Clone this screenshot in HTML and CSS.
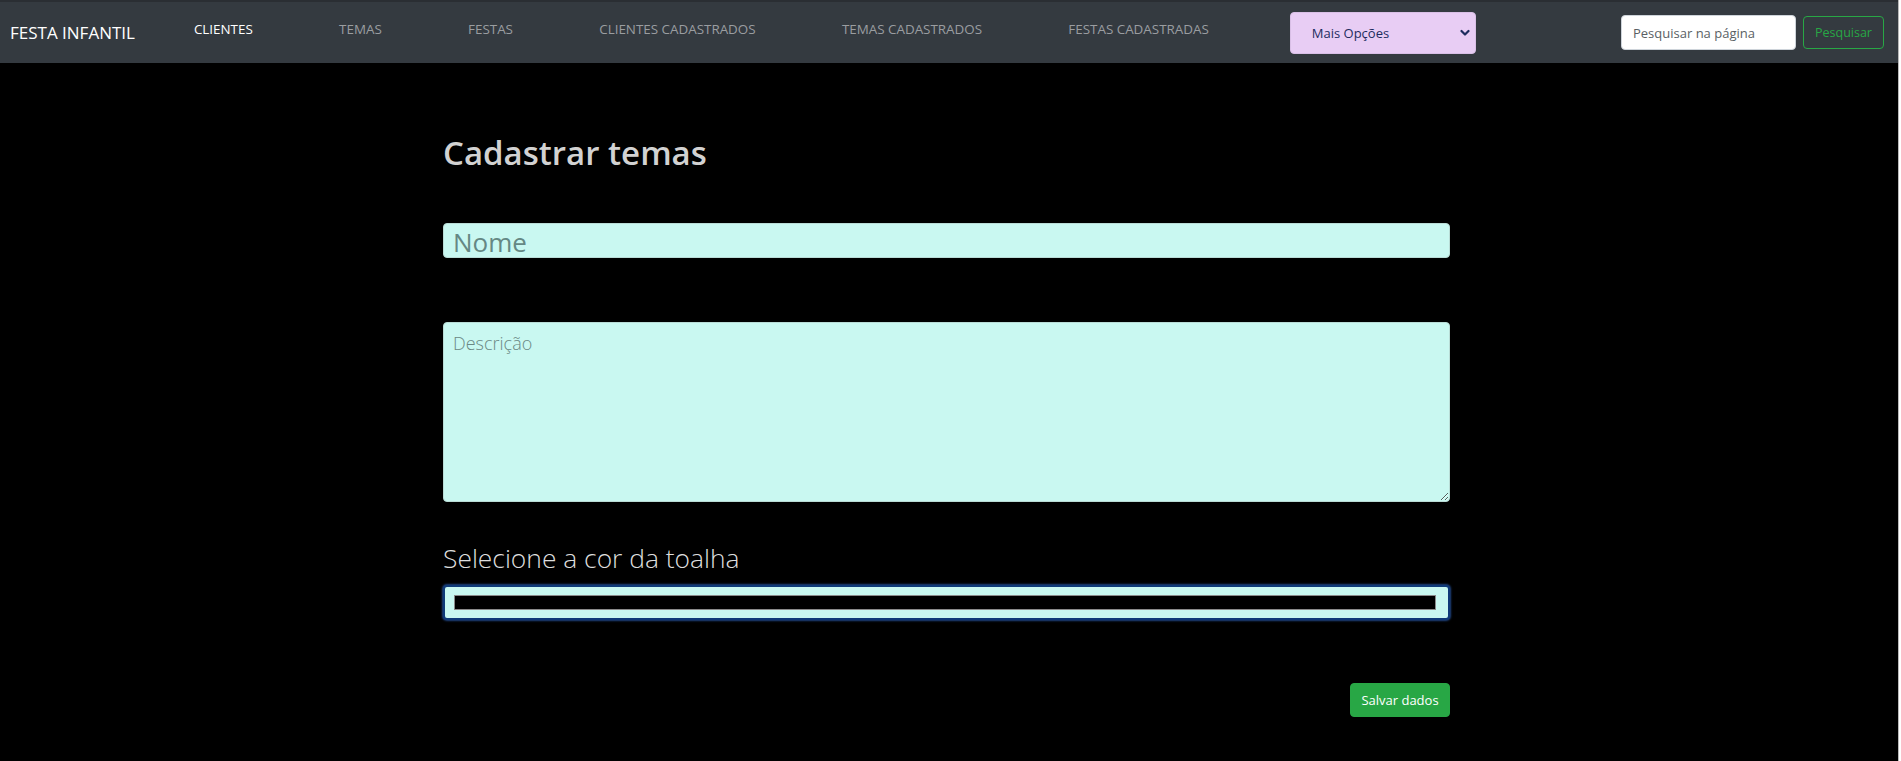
FILE: index.html
```html
<!DOCTYPE html>
<html lang="pt-BR">
<head>
<meta charset="utf-8">
<title>Festa Infantil - Cadastrar temas</title>
<link rel="stylesheet" href="styles.css">
</head>
<body>
<div class="page">
  <nav class="navbar">
    <a class="brand" href="#">FESTA INFANTIL</a>
    <ul class="nav-links">
      <li><a class="nav-link active" href="#">CLIENTES</a></li>
      <li><a class="nav-link" href="#">TEMAS</a></li>
      <li><a class="nav-link" href="#">FESTAS</a></li>
      <li><a class="nav-link" href="#">CLIENTES CADASTRADOS</a></li>
      <li><a class="nav-link" href="#">TEMAS CADASTRADOS</a></li>
      <li><a class="nav-link" href="#">FESTAS CADASTRADAS</a></li>
    </ul>
    <div class="select-wrap">
      <select class="nav-select">
        <option>Mais Opções</option>
      </select>
      <svg class="chevron" width="10" height="8" viewBox="0 0 10 8"><path d="M1.5 2 L5 5.5 L8.5 2" fill="none" stroke="#1d2c5e" stroke-width="2.2" stroke-linecap="round" stroke-linejoin="round"/></svg>
    </div>
    <form class="search">
      <input class="search-input" type="search" placeholder="Pesquisar na página">
      <button class="search-btn" type="button">Pesquisar</button>
    </form>
  </nav>

  <main class="container">
    <h1 class="title">Cadastrar temas</h1>
    <input class="field field-name" type="text" placeholder="Nome">
    <textarea class="field field-desc" placeholder="Descrição"></textarea>
    <label class="color-label" for="cor">Selecione a cor da toalha</label>
    <input class="color-input" id="cor" type="color" value="#000000">
    <div class="actions">
      <button class="save-btn" type="button">Salvar dados</button>
    </div>
  </main>
</div>
</body>
</html>
```
FILE: styles.css
```css
* { box-sizing: border-box; }

html, body {
  margin: 0;
  padding: 0;
  background: #ffffff;
}

body {
  font-family: "Open Sans", "Noto Sans", sans-serif;
}

.page {
  margin-right: 2px;
  border-right: 1px solid #b9b9b9;
  background: #000;
  min-height: 100vh;
}

/* NAVBAR */
.navbar {
  display: flex;
  align-items: center;
  height: 63px;
  border-top: 2px solid #2a2e33;
  background: #343a40;
  padding: 0 14px 0 10px;
}

.brand {
  font-size: 17px;
  line-height: 1.5;
  color: #ffffff;
  text-decoration: none;
  margin-right: 59px;
  white-space: nowrap;
}

.nav-links {
  display: flex;
  gap: 86.3px;
  list-style: none;
  margin: 0;
  padding: 0 0 10px 0;
}

.nav-link {
  font-size: 13.4px;
  line-height: 20px;
  color: #9a9da0;
  text-decoration: none;
  white-space: nowrap;
}

.nav-link.active {
  color: #ffffff;
}

.select-wrap {
  position: relative;
  margin-left: 81px;
  width: 186px;
  height: 42px;
}

.nav-select {
  appearance: none;
  -webkit-appearance: none;
  width: 100%;
  height: 100%;
  border: 1px solid #d9bfe6;
  border-radius: 4px;
  background: #e8cdf4;
  color: #1d2c5e;
  font-family: "Open Sans", sans-serif;
  font-size: 13px;
  padding: 0 24px 0 21px;
}

.chevron {
  position: absolute;
  right: 6px;
  top: 17px;
}

.search {
  display: flex;
  align-items: center;
  gap: 7px;
  margin: 0 0 0 auto;
}

.search-input {
  width: 175px;
  height: 35px;
  border: 1px solid #ced4da;
  border-radius: 4px;
  background: #fff;
  font-family: "Open Sans", sans-serif;
  font-size: 13px;
  padding: 0 11px;
  color: #495057;
}

.search-input::placeholder {
  color: #5a5f64;
}

.search-btn {
  width: 81px;
  height: 33px;
  border: 1px solid #28a745;
  border-radius: 4px;
  background: transparent;
  color: #28a745;
  font-family: "Open Sans", sans-serif;
  font-size: 12.5px;
  padding: 0;
}

/* MAIN */
.container {
  width: 1007px;
  margin: 0 0 0 calc(50% - 506px);
  padding-top: 69px;
  padding-bottom: 40px;
}

.title {
  margin: 0 0 50px 0;
  font-size: 33px;
  line-height: 41px;
  font-weight: 600;
  color: #d2d2d2;
}

.field {
  display: block;
  width: 100%;
  border: 1px solid #b9dcd6;
  border-radius: 4px;
  background: #c9f8f1;
  font-family: "Open Sans", sans-serif;
  color: #33504d;
  outline: none;
}

.field::placeholder {
  color: #658884;
}

.field-name {
  height: 35px;
  font-size: 26px;
  line-height: 29px;
  padding: 2px 9px 0 9px;
  margin-bottom: 64px;
}

.field-desc {
  height: 180px;
  font-size: 18px;
  font-weight: 300;
  line-height: 22px;
  padding: 9px 9px;
  resize: vertical;
  margin-bottom: 41px;
}

.field-desc::placeholder {
  color: #6b8884;
}

.color-label {
  display: block;
  font-size: 26.4px;
  font-weight: 300;
  line-height: 30px;
  color: #dedede;
  margin-bottom: 12px;
}

.color-input {
  -webkit-appearance: none;
  appearance: none;
  display: block;
  width: 100%;
  height: 35px;
  padding: 0;
  margin: 0 0 63px 0;
  border: 2px solid #0f3a78;
  border-radius: 4px;
  background: #c9f8f1;
  box-shadow: 0 0 2px 1px rgba(50, 110, 210, 0.6);
  cursor: pointer;
}

.color-input::-webkit-color-swatch-wrapper {
  padding: 8px 12px 8px 9px;
}

.color-input::-webkit-color-swatch {
  border: 1px solid #8a8a8a;
  border-radius: 0;
}

.actions {
  display: flex;
  justify-content: flex-end;
}

.save-btn {
  width: 100px;
  height: 34px;
  border: 1px solid #28a745;
  border-radius: 4px;
  background: #28a745;
  color: #ffffff;
  font-family: "Open Sans", sans-serif;
  font-size: 13px;
  padding: 0;
}
```
